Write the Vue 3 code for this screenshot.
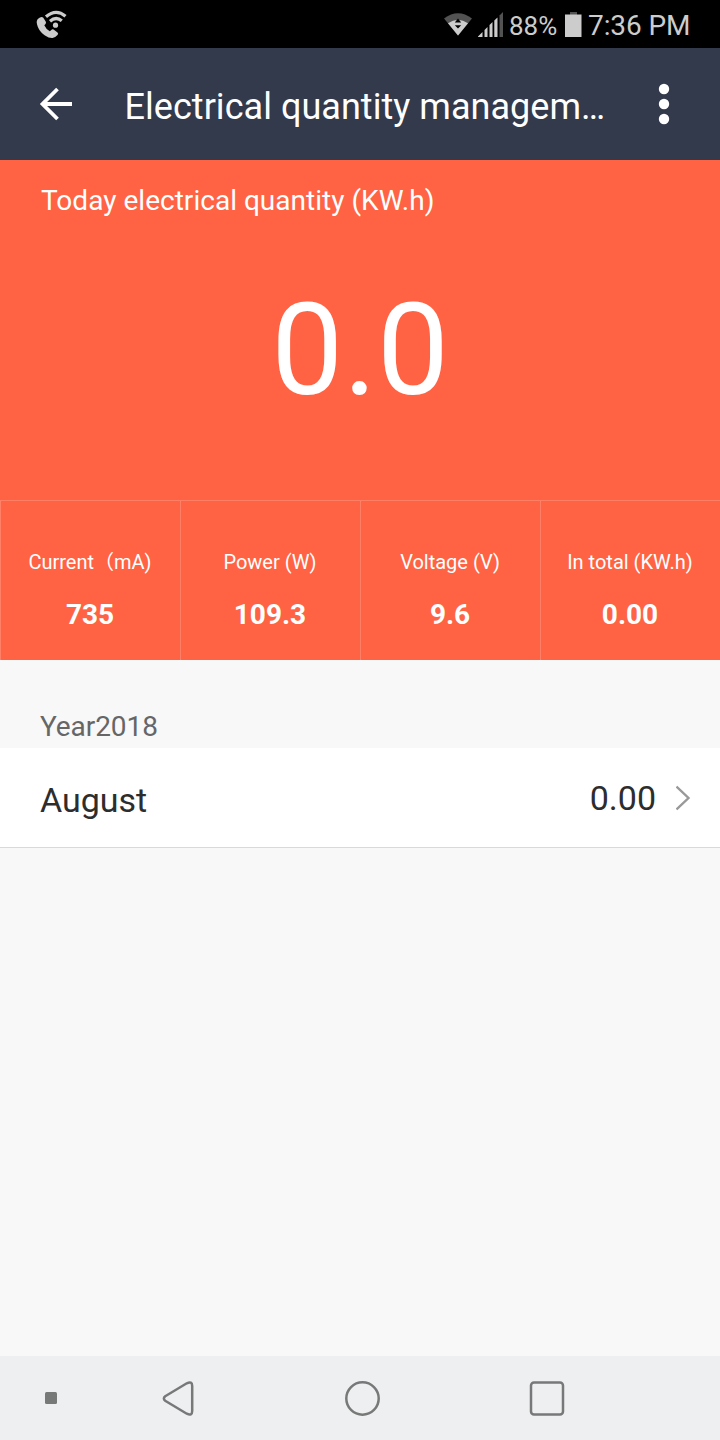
<script setup>
const stats = [
  { label: 'Current（mA)', value: '735' },
  { label: 'Power (W)', value: '109.3' },
  { label: 'Voltage (V)', value: '9.6' },
  { label: 'In total (KW.h)', value: '0.00' },
]
const months = [{ name: 'August', total: '0.00' }]
</script>

<template>
  <div class="screen">
    <div class="status">
      <svg class="call" width="32" height="30" viewBox="0 0 32 30">
        <path d="M4 7.500 Q0.500 9 0.700 12.500 C1.500 18 4.500 22.500 9 25.500 Q13 28.200 16.500 28 Q19 27.800 21.500 25 Q22.800 23.600 21.500 22.500 L17.600 19.600 Q16.300 18.900 15.300 19.900 L13.800 21.200 Q9.700 18.700 8.300 15.200 L9.500 14 Q10.500 12.800 9.700 11.600 L7.300 7.700 Q5.900 6.300 4 7.500 Z" fill="#ccc" />
        <path d="M10 6.800 Q20 -1.800 29.500 6.300" fill="none" stroke="#ccc" stroke-width="3.200" />
        <path d="M14 11.300 Q20 6 25.800 10.800" fill="none" stroke="#ccc" stroke-width="3.200" />
        <circle cx="19.500" cy="15.200" r="2.600" fill="#ccc" />
      </svg>
      <svg class="wifi" width="28" height="23" viewBox="0 0 28 23">
        <path d="M0 5.500 Q14 -5 28 5.500 L14 22.500 Z" fill="#525252" />
        <path d="M4 10.300 Q14 3 24 10.300 L14 22.500 Z" fill="#ccc" />
        <path d="M14 5.500 L17.200 9.600 H10.800 Z M14 15.600 L17.200 12.200 H10.800 Z" fill="#000" />
      </svg>
      <svg class="signal" width="26" height="25" viewBox="0 0 26 25">
        <path d="M0 25 V24.500 L4.500 20 V25 Z M6.500 25 V18 L9.500 15 V25 Z M11.500 25 V13 L14.500 10 V25 Z M16.300 25 V8.500 L19.500 5.500 V25 Z" fill="#ccc" />
        <path d="M21.500 25 V3.500 L25 0 V25 Z" fill="#525252" />
      </svg>
      <span class="percent">88%</span>
      <svg class="battery" width="17" height="25" viewBox="0 0 17 25">
        <rect x="5" width="7" height="3" fill="#525252" />
        <rect y="2.500" width="16.500" height="22.500" fill="#ccc" />
      </svg>
      <span class="time">7:36 PM</span>
    </div>

    <header class="bar">
      <svg class="back" width="34" height="34" viewBox="0 0 34 34">
        <path d="M33 17 H4 M18.500 2 L3.500 17 L18.500 32" fill="none" stroke="#fff" stroke-width="3.800" />
      </svg>
      <h1 class="title">Electrical quantity managem…</h1>
      <svg class="more" width="12" height="42" viewBox="0 0 12 42">
        <circle cx="6" cy="6" r="5.200" fill="#fff" />
        <circle cx="6" cy="21" r="5.200" fill="#fff" />
        <circle cx="6" cy="36" r="5.200" fill="#fff" />
      </svg>
    </header>

    <section class="today">
      <div class="caption">Today electrical quantity (KW.h)</div>
      <div class="reading">0.0</div>
    </section>

    <section class="stats">
      <div v-for="s in stats" :key="s.label" class="stat">
        <div class="label">{{ s.label }}</div>
        <div class="value">{{ s.value }}</div>
      </div>
    </section>

    <div class="year">Year2018</div>
    <div v-for="m in months" :key="m.name" class="month">
      <span class="name">{{ m.name }}</span>
      <span class="total">{{ m.total }}</span>
      <svg class="chevron" width="16" height="26" viewBox="0 0 16 26">
        <path d="M0.500 1.500 L12.500 13 L0.500 24.500" fill="none" stroke="#999" stroke-width="2.400" />
      </svg>
    </div>

    <nav class="nav">
      <svg width="720" height="84" viewBox="0 0 720 84" fill="none" stroke="#777978" stroke-width="2.500">
        <rect x="45" y="36" width="12" height="12" rx="1.500" fill="#777978" stroke="none" />
        <path d="M165.200 40.300 L186.800 27.300 Q192.200 24.800 192.200 30 V55 Q192.200 60.200 186.800 57.700 L165.200 44.700 Q162.500 42.500 165.200 40.300 Z" />
        <circle cx="362.500" cy="42.500" r="16.200" />
        <rect x="531" y="26.500" width="32" height="32" rx="3" />
      </svg>
    </nav>
  </div>
</template>

<style>
body {
  margin: 0;
}
</style>

<style scoped>
.screen {
  width: 720px;
  height: 1440px;
  display: flex;
  flex-direction: column;
  overflow: hidden;
  background: #f8f8f8;
  font-family: Roboto, "Noto Sans CJK SC", sans-serif;
  color: #fff;
}
svg {
  display: block;
  flex: none;
}
.status {
  height: 48px;
  flex: none;
  box-sizing: border-box;
  padding: 0 29px 0 36px;
  display: flex;
  align-items: flex-start;
  background: #000;
  color: #ccc;
  white-space: nowrap;
}
.call {
  margin-top: 10px;
}
.wifi {
  margin: 13px 6px 0 auto;
}
.signal {
  margin-top: 12px;
}
.percent {
  width: 56px;
  margin-left: 5px;
  font-size: 26px;
  line-height: 52px;
}
.battery {
  margin-top: 12px;
}
.time {
  width: 103px;
  margin-left: 6px;
  font-size: 28px;
  line-height: 52px;
  letter-spacing: -0.100px;
}
.bar {
  height: 112px;
  flex: none;
  box-sizing: border-box;
  padding: 0 50px 0 39px;
  display: flex;
  align-items: center;
  background: #323a4b;
}
.title {
  width: 490px;
  margin: 6px 0 0 51.500px;
  font-size: 36px;
  font-weight: 400;
  line-height: 48px;
  letter-spacing: 0.040px;
  white-space: nowrap;
}
.more {
  margin-left: auto;
}
.today {
  height: 340px;
  flex: none;
  background: #ff6344;
}
.caption {
  padding: 21px 0 0 41px;
  font-size: 28px;
  line-height: 40px;
  letter-spacing: 0.020px;
}
.reading {
  margin-top: 54px;
  font-size: 128px;
  line-height: 150px;
  text-align: center;
}
.stats {
  height: 160px;
  flex: none;
  display: grid;
  grid-template-columns: repeat(4, 1fr);
  background: #ff6344;
}
.stat {
  padding-right: 1px;
  border-top: 1px solid #ff8067;
  border-left: 1px solid #ff8067;
  text-align: center;
  white-space: nowrap;
}
.label {
  margin-top: 46px;
  height: 30px;
  font-size: 20px;
  line-height: 30px;
}
.value {
  margin-top: 18px;
  font-size: 28px;
  font-weight: 700;
  line-height: 40px;
}
.year {
  height: 88px;
  flex: none;
  box-sizing: border-box;
  padding: 47px 0 0 40px;
  font-size: 28px;
  line-height: 40px;
  letter-spacing: -0.080px;
  color: #666;
}
.month {
  height: 100px;
  flex: none;
  box-sizing: border-box;
  padding: 0 28px 0 40px;
  display: flex;
  align-items: center;
  background: #fff;
  border-bottom: 1px solid #d9d9d9;
  font-size: 34px;
  color: #2d2d2d;
}
.name {
  margin-top: 5px;
}
.total {
  margin-left: auto;
}
.chevron {
  margin-left: 20px;
}
.nav {
  height: 84px;
  margin-top: auto;
  background: #eeeff1;
}
</style>
